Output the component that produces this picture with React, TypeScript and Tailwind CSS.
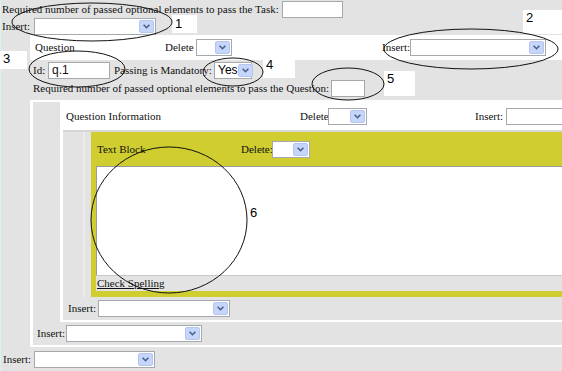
import React from "react";

function Arrow() {
  return (
    <div className="flex h-[13px] w-[15px] shrink-0 items-center justify-center rounded-[2px] border border-[#b4c6ee] bg-[#c6d6fb]">
      <svg width="7" height="5" viewBox="0 0 7 5">
        <path d="M0.6 0.8 L3.5 3.7 L6.4 0.8" stroke="#4a5e85" strokeWidth="1.6" fill="none" />
      </svg>
    </div>
  );
}

function Select({ className, value }: { className: string; value?: string }) {
  return (
    <div
      className={`flex h-[17px] shrink-0 items-center justify-between border border-[#a5a9ad] bg-white pl-[3px] pr-[1px] font-['Liberation_Sans',Arial,sans-serif] text-[12px] text-black ${className}`}
    >
      <span>{value}</span>
      <Arrow />
    </div>
  );
}

function Input({ className, value }: { className: string; value?: string }) {
  return (
    <div
      className={`flex h-[17px] shrink-0 items-center border border-[#a5a9ad] bg-white pl-[3px] font-['Liberation_Sans',Arial,sans-serif] text-[12px] ${className}`}
    >
      {value}
    </div>
  );
}

function Num({ className, n }: { className: string; n: string }) {
  return (
    <div
      className={`absolute bg-white pl-[3px] font-['Liberation_Sans',Arial,sans-serif] text-[13px] leading-[15px] text-black ${className}`}
    >
      {n}
    </div>
  );
}

export default function App() {
  return (
    <div className="relative h-[371px] w-[562px] overflow-hidden bg-[#e3e3e3] font-['Liberation_Serif','Times_New_Roman',serif] text-[11px] text-[#111]">
      <div className="w-[640px] border-l border-[#d8f3ef]">
        {/* task level */}
        <div className="flex h-[18px] items-center pl-[1px]">
          <span className="w-[280px]">Required number of passed optional elements to pass the Task:</span>
          <Input className="h-[16px] w-[61px]" />
        </div>
        <div className="flex h-[17px] items-center pl-[1px]">
          <span className="w-[32px]">Insert:</span>
          <Select className="w-[122px]" />
        </div>

        {/* question */}
        <div className="ml-[29px]">
          <div className="flex h-[25px] items-center bg-white pl-[5px]">
            <span className="w-[130px]">Question</span>
            <span className="w-[31px]">Delete</span>
            <Select className="w-[36px]" />
            <span className="ml-[150px] w-[28px]">Insert:</span>
            <Select className="w-[136px]" />
          </div>
          <div className="flex h-[20px] items-center pl-[3px]">
            <span className="w-[15px]">Id:</span>
            <Input className="w-[62px]" value="q.1" />
            <span className="ml-[4px] w-[100px]">Passing is Mandatory:</span>
            <Select className="w-[38px]" value="Yes" />
          </div>
          <div className="flex h-[17px] items-center pl-[3px]">
            <span className="w-[298px]">Required number of passed optional elements to pass the Question:</span>
            <Input className="h-[16px] w-[34px]" />
          </div>

          <div className="mt-[3px] border-y-2 border-l-[3px] border-white">
            <div className="pl-[27px]">
              {/* question information */}
              <div className="border-b-2 border-l-[3px] border-white">
                <div className="flex h-[28px] items-center bg-white pl-[3px]">
                  <span className="w-[234px]">Question Information</span>
                  <span className="w-[28px]">Delete</span>
                  <Select className="w-[39px]" />
                  <span className="ml-[108px] w-[31px]">Insert:</span>
                  <Select className="w-[130px]" />
                </div>
                <div className="h-[2px] bg-[#d6d6d6]" />
                <div className="flex">
                  <div className="w-[20px]" />
                  <div className="w-[2px] bg-[#ececec]" />
                  <div className="w-[6px]" />
                  <div className="flex-1 bg-[#cfcd2f] pb-[6px] pl-[5px]">
                    <div className="flex h-[34px] items-center pl-[1px]">
                      <span className="w-[144px]">Text Block</span>
                      <span className="w-[31px]">Delete:</span>
                      <Select className="w-[38px]" />
                    </div>
                    <div className="h-[109px] border-l border-t border-[#9a9a9a] bg-white" />
                    <div className="flex h-[16px] items-center border-t border-[#c8c8c8] bg-[#e3e3e3] pl-[1px]">
                      <span className="underline">Check Spelling</span>
                    </div>
                  </div>
                </div>
                <div className="flex h-[23px] items-center pl-[5px]">
                  <span className="w-[30px]">Insert:</span>
                  <Select className="w-[132px]" />
                </div>
              </div>
            </div>
            <div className="flex h-[23px] items-center pl-[4px]">
              <span className="w-[29px]">Insert:</span>
              <Select className="w-[136px]" />
            </div>
          </div>
        </div>

        <div className="flex h-[24px] items-center pl-[2px]">
          <span className="w-[31px]">Insert:</span>
          <Select className="w-[121px]" />
        </div>
      </div>

      {/* annotation labels */}
      <Num className="left-[172px] top-[15px] h-[18px] w-[25px] pt-[1px]" n="1" />
      <Num className="left-[523px] top-[10px] h-[24px] w-[39px] pl-[2px]" n="2" />
      <Num className="left-0 top-[51px] h-[18px] w-[27px] pl-0" n="3" />
      <Num className="left-[263px] top-[57px] h-[21px] w-[32px]" n="4" />
      <Num className="left-[384px] top-[71px] h-[25px] w-[31px]" n="5" />
      <div className="absolute left-[250px] top-[205px] font-['Liberation_Sans',Arial,sans-serif] text-[13px] leading-[15px] text-black">
        6
      </div>

      <svg className="pointer-events-none absolute left-0 top-0" width="562" height="371">
        <g fill="none" stroke="#111" strokeWidth="1">
          <ellipse cx="92" cy="22" rx="80" ry="19" />
          <ellipse cx="471" cy="49" rx="87" ry="20" />
          <ellipse cx="77" cy="69" rx="48" ry="18" />
          <ellipse cx="233" cy="72" rx="30" ry="14" />
          <ellipse cx="348" cy="84" rx="36" ry="16" />
          <ellipse cx="169" cy="220" rx="78" ry="73" />
        </g>
      </svg>
    </div>
  );
}
